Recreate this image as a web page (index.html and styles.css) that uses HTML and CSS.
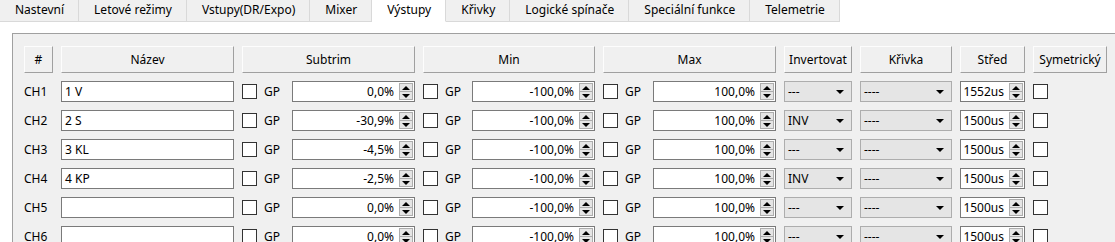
FILE: index.html
```html
<!DOCTYPE html>
<html lang="cs">
<head>
    <meta charset="UTF-8">
    <title>Výstupy</title>
    <link rel="stylesheet" href="styles.css">
</head>
<body>
<ul class="tabs">
    <li>Nastevní</li>
    <li>Letové režimy</li>
    <li>Vstupy(DR/Expo)</li>
    <li>Mixer</li>
    <li class="current">Výstupy</li>
    <li>Křivky</li>
    <li>Logické spínače</li>
    <li>Speciální funkce</li>
    <li>Telemetrie</li>
</ul>
<div class="pane">
    <div class="panel">
        <div class="row head">
            <div class="hdr">#</div>
            <div class="hdr">Název</div>
            <div class="hdr">Subtrim</div>
            <div class="hdr">Min</div>
            <div class="hdr">Max</div>
            <div class="hdr">Invertovat</div>
            <div class="hdr">Křivka</div>
            <div class="hdr">Střed</div>
            <div class="hdr">Symetrický</div>
        </div>

        <div class="row">
            <div class="ch">CH1</div>
            <div class="edit">1 V</div>
            <div class="trim"><span class="check"></span><span class="gp">GP</span><div class="spin"><span class="val">0,0%</span><span class="arrows"><i class="up"></i><i class="down"></i></span></div></div>
            <div class="trim"><span class="check"></span><span class="gp">GP</span><div class="spin"><span class="val">-100,0%</span><span class="arrows"><i class="up"></i><i class="down"></i></span></div></div>
            <div class="trim"><span class="check"></span><span class="gp">GP</span><div class="spin"><span class="val">100,0%</span><span class="arrows"><i class="up"></i><i class="down"></i></span></div></div>
            <div class="combo">---</div>
            <div class="combo">----</div>
            <div class="spin"><span class="val">1552us</span><span class="arrows"><i class="up"></i><i class="down"></i></span></div>
            <div class="cell"><span class="check"></span></div>
        </div>

        <div class="row">
            <div class="ch">CH2</div>
            <div class="edit">2 S</div>
            <div class="trim"><span class="check"></span><span class="gp">GP</span><div class="spin"><span class="val">-30,9%</span><span class="arrows"><i class="up"></i><i class="down"></i></span></div></div>
            <div class="trim"><span class="check"></span><span class="gp">GP</span><div class="spin"><span class="val">-100,0%</span><span class="arrows"><i class="up"></i><i class="down"></i></span></div></div>
            <div class="trim"><span class="check"></span><span class="gp">GP</span><div class="spin"><span class="val">100,0%</span><span class="arrows"><i class="up"></i><i class="down"></i></span></div></div>
            <div class="combo">INV</div>
            <div class="combo">----</div>
            <div class="spin"><span class="val">1500us</span><span class="arrows"><i class="up"></i><i class="down"></i></span></div>
            <div class="cell"><span class="check"></span></div>
        </div>

        <div class="row">
            <div class="ch">CH3</div>
            <div class="edit">3 KL</div>
            <div class="trim"><span class="check"></span><span class="gp">GP</span><div class="spin"><span class="val">-4,5%</span><span class="arrows"><i class="up"></i><i class="down"></i></span></div></div>
            <div class="trim"><span class="check"></span><span class="gp">GP</span><div class="spin"><span class="val">-100,0%</span><span class="arrows"><i class="up"></i><i class="down"></i></span></div></div>
            <div class="trim"><span class="check"></span><span class="gp">GP</span><div class="spin"><span class="val">100,0%</span><span class="arrows"><i class="up"></i><i class="down"></i></span></div></div>
            <div class="combo">---</div>
            <div class="combo">----</div>
            <div class="spin"><span class="val">1500us</span><span class="arrows"><i class="up"></i><i class="down"></i></span></div>
            <div class="cell"><span class="check"></span></div>
        </div>

        <div class="row">
            <div class="ch">CH4</div>
            <div class="edit">4 KP</div>
            <div class="trim"><span class="check"></span><span class="gp">GP</span><div class="spin"><span class="val">-2,5%</span><span class="arrows"><i class="up"></i><i class="down"></i></span></div></div>
            <div class="trim"><span class="check"></span><span class="gp">GP</span><div class="spin"><span class="val">-100,0%</span><span class="arrows"><i class="up"></i><i class="down"></i></span></div></div>
            <div class="trim"><span class="check"></span><span class="gp">GP</span><div class="spin"><span class="val">100,0%</span><span class="arrows"><i class="up"></i><i class="down"></i></span></div></div>
            <div class="combo">INV</div>
            <div class="combo">----</div>
            <div class="spin"><span class="val">1500us</span><span class="arrows"><i class="up"></i><i class="down"></i></span></div>
            <div class="cell"><span class="check"></span></div>
        </div>

        <div class="row">
            <div class="ch">CH5</div>
            <div class="edit"></div>
            <div class="trim"><span class="check"></span><span class="gp">GP</span><div class="spin"><span class="val">0,0%</span><span class="arrows"><i class="up"></i><i class="down"></i></span></div></div>
            <div class="trim"><span class="check"></span><span class="gp">GP</span><div class="spin"><span class="val">-100,0%</span><span class="arrows"><i class="up"></i><i class="down"></i></span></div></div>
            <div class="trim"><span class="check"></span><span class="gp">GP</span><div class="spin"><span class="val">100,0%</span><span class="arrows"><i class="up"></i><i class="down"></i></span></div></div>
            <div class="combo">---</div>
            <div class="combo">----</div>
            <div class="spin"><span class="val">1500us</span><span class="arrows"><i class="up"></i><i class="down"></i></span></div>
            <div class="cell"><span class="check"></span></div>
        </div>

        <div class="row">
            <div class="ch">CH6</div>
            <div class="edit"></div>
            <div class="trim"><span class="check"></span><span class="gp">GP</span><div class="spin"><span class="val">0,0%</span><span class="arrows"><i class="up"></i><i class="down"></i></span></div></div>
            <div class="trim"><span class="check"></span><span class="gp">GP</span><div class="spin"><span class="val">-100,0%</span><span class="arrows"><i class="up"></i><i class="down"></i></span></div></div>
            <div class="trim"><span class="check"></span><span class="gp">GP</span><div class="spin"><span class="val">100,0%</span><span class="arrows"><i class="up"></i><i class="down"></i></span></div></div>
            <div class="combo">---</div>
            <div class="combo">----</div>
            <div class="spin"><span class="val">1500us</span><span class="arrows"><i class="up"></i><i class="down"></i></span></div>
            <div class="cell"><span class="check"></span></div>
        </div>
    </div>
</div>
</body>
</html>
```

FILE: styles.css
```css
*{
    margin: 0;
    padding: 0;
    box-sizing: border-box;
}
html,body{
    height: 100%;
    overflow: hidden;
}
body{
    font-family: "Noto Sans", "Liberation Sans", sans-serif;
    font-size: 12px;
    color: #000;
    background-color: #fff;
}
ul,li{
    list-style: none;
}

/*zalozky nahore*/
.tabs{
    display: flex;
    height: 22px;
}
.tabs li{
    height: 22px;
    line-height: 20px;
    padding: 0 14px 0 15px;
    background-color: #f0f0f0;
    border: 1px solid #d9d9d9;
    border-left: none;
    border-top: none;
    white-space: nowrap;
}
.tabs li.current{
    background-color: #fff;
    border-bottom-color: #fff;
    line-height: 19px;
}

/*bila plocha + sedy panel*/
.pane{
    padding: 11px 0 0 12px;
    height: calc(100% - 22px);
}
.panel{
    height: 100%;
    background-color: #f0f0f0;
    border-top: 1px solid #a0a0a0;
    border-left: 1px solid #a0a0a0;
    padding: 12px 0 0 11px;
}

.row{
    display: grid;
    grid-template-columns: 29px 173px 173px 172px 173px 68px 92px 65px 74px;
    column-gap: 8px;
    height: 21px;
    margin-bottom: 8px;
}
.row.head{
    height: 27px;
}
.hdr{
    background-color: #f0f0f0;
    border: 1px solid #a0a0a0;
    border-top-color: #fdfdfd;
    border-left-color: #fdfdfd;
    text-align: center;
    line-height: 25px;
}

.ch{
    line-height: 21px;
}
.edit{
    background-color: #fff;
    border: 1px solid #7a7a7a;
    line-height: 19px;
    padding-left: 3px;
}

.check{
    display: block;
    width: 15px;
    height: 15px;
    background-color: #fff;
    border: 1px solid #333;
}
.cell{
    display: flex;
    align-items: center;
}

.trim{
    display: flex;
    align-items: center;
}
.trim .gp{
    margin-left: 7px;
}
.trim .spin{
    margin-left: auto;
    width: 123px;
    height: 21px;
}

.spin{
    display: flex;
    background-color: #fff;
    border: 1px solid #7a7a7a;
}
.spin .val{
    flex: 1;
    text-align: right;
    line-height: 19px;
    padding-right: 5px;
}
.spin .arrows{
    width: 14px;
    margin: 1px 1px 1px 0;
    display: flex;
    flex-direction: column;
    border: 1px solid #adadad;
    background-color: #e5e5e5;
}
.spin .arrows i{
    flex: 1;
    display: flex;
    align-items: center;
    justify-content: center;
}
.spin .arrows .down{
    border-top: 1px solid #adadad;
}
.spin .arrows .up::before{
    content: '';
    border-left: 4px solid transparent;
    border-right: 4px solid transparent;
    border-bottom: 4px solid #000;
}
.spin .arrows .down::before{
    content: '';
    border-left: 4px solid transparent;
    border-right: 4px solid transparent;
    border-top: 4px solid #000;
}

/*rozbalovaci seznam*/
.combo{
    position: relative;
    background-color: #e5e5e5;
    border: 1px solid #adadad;
    line-height: 19px;
    padding-left: 3px;
}
.combo::after{
    content: '';
    position: absolute;
    right: 7px;
    top: 8px;
    border-left: 4px solid transparent;
    border-right: 4px solid transparent;
    border-top: 4px solid #000;
}
```
